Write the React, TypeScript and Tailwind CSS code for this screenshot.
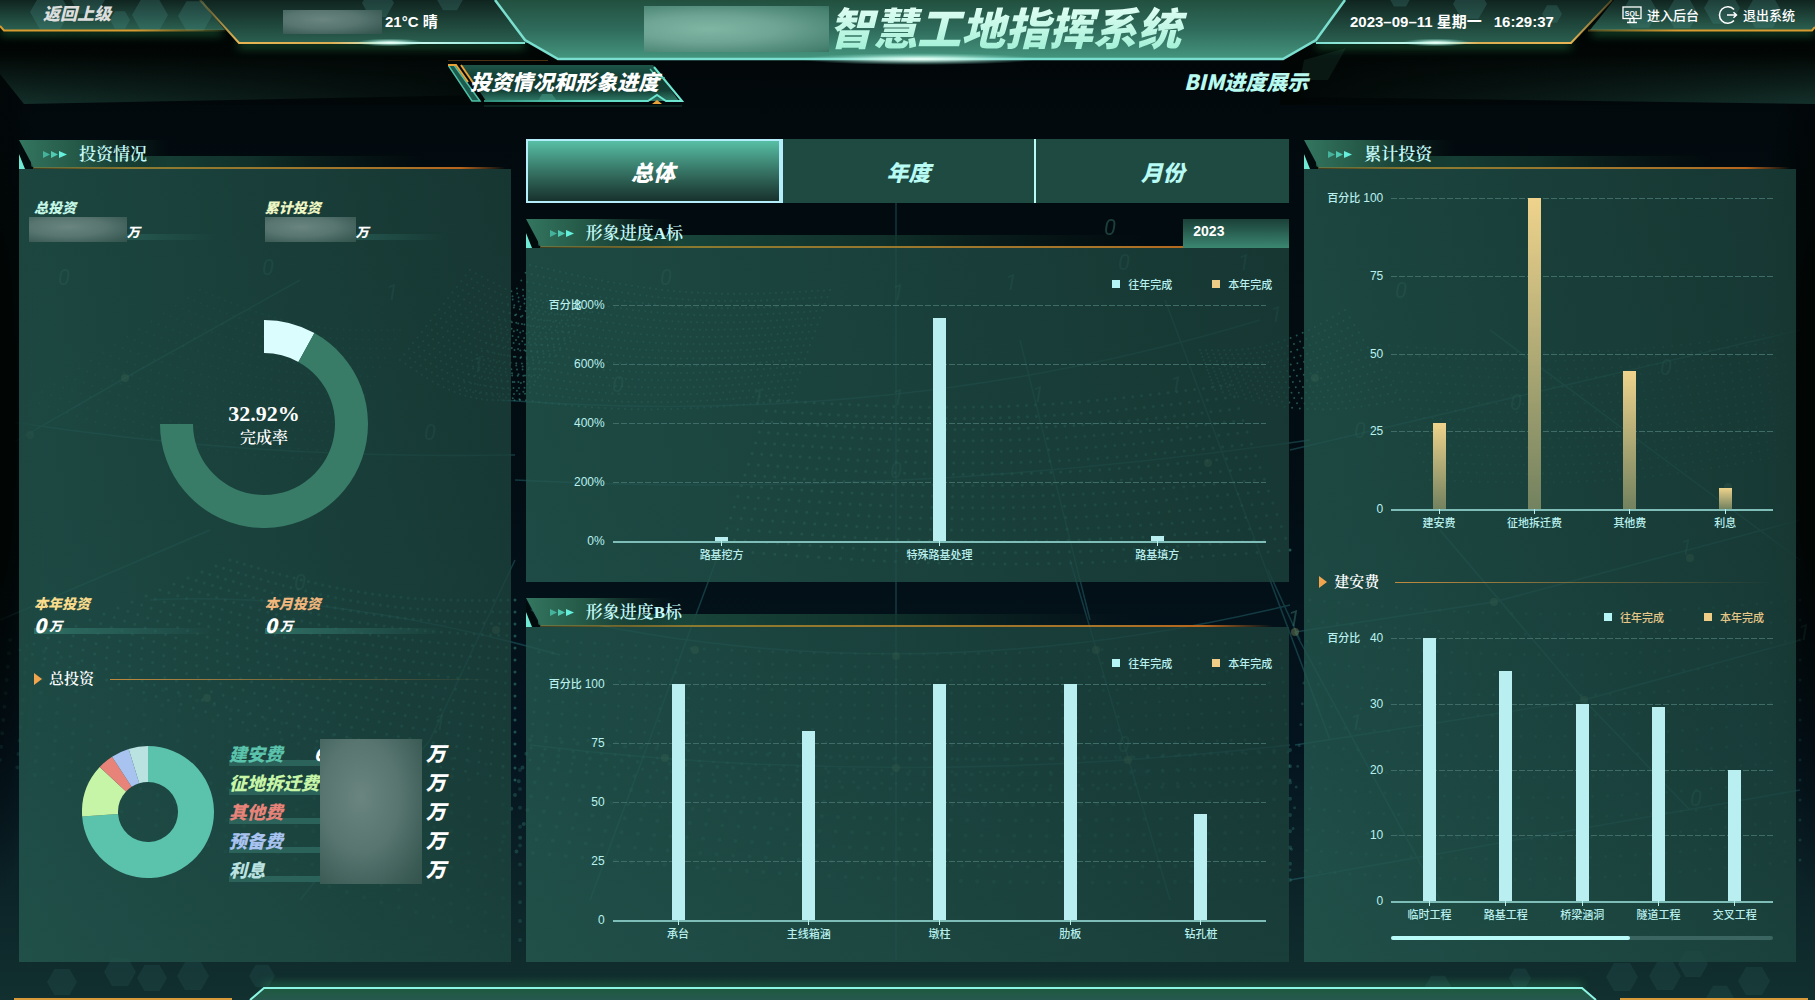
import type { ReactNode } from "react";

const display = "font-['Noto_Sans_CJK_SC',sans-serif] font-black italic";
const serif = "font-['Liberation_Serif','Noto_Serif_CJK_SC','Noto_Sans_CJK_SC',serif]";

/* ---------- backdrop ---------- */

type Pt = [number, number];

function dots([a, b, c, d]: [Pt, Pt, Pt, Pt], cols: number, rows: number) {
  let path = "";
  for (let j = 0; j <= rows; j++) {
    for (let i = 0; i <= cols; i++) {
      const u = i / cols;
      const v = j / rows;
      const x = (1 - v) * ((1 - u) * a[0] + u * b[0]) + v * ((1 - u) * d[0] + u * c[0]);
      const y =
        (1 - v) * ((1 - u) * a[1] + u * b[1]) + v * ((1 - u) * d[1] + u * c[1]) + 14 * Math.sin(u * Math.PI);
      path += `M${x.toFixed(1)} ${y.toFixed(1)}h0`;
    }
  }
  return path;
}

const patches: { d: string; w: number; o: number }[] = [
  { d: dots([[470, 270], [600, 300], [520, 400], [400, 360]], 22, 16), w: 2, o: 0.5 },
  { d: dots([[530, 265], [830, 290], [790, 400], [460, 390]], 50, 16), w: 2, o: 0.5 },
  { d: dots([[770, 400], [1230, 385], [1290, 550], [720, 550]], 52, 14), w: 3, o: 0.5 },
  { d: dots([[200, 290], [400, 330], [330, 460], [30, 400]], 32, 14), w: 2, o: 0.25 },
  { d: dots([[230, 560], [515, 600], [515, 780], [20, 650]], 40, 15), w: 3, o: 0.45 },
  { d: dots([[10, 640], [520, 770], [520, 940], [0, 760]], 30, 9), w: 4, o: 0.2 },
  { d: dots([[540, 640], [1280, 640], [1290, 780], [530, 760]], 54, 10), w: 3, o: 0.32 },
  { d: dots([[530, 740], [1290, 750], [1290, 880], [500, 850]], 48, 8), w: 4, o: 0.28 },
  { d: dots([[1200, 350], [1345, 310], [1400, 400], [1215, 390]], 24, 12), w: 2, o: 0.5 },
  { d: dots([[1380, 345], [1800, 330], [1810, 450], [1430, 480]], 46, 15), w: 2, o: 0.32 },
  { d: dots([[1310, 600], [1800, 600], [1800, 860], [1290, 870]], 34, 13), w: 3, o: 0.26 },
];

const digits: [string, number, number][] = [
  ["0", 58, 285], ["0", 262, 275], ["1", 386, 300], ["0", 424, 440], ["1", 472, 372], ["0", 294, 590],
  ["1", 434, 730], ["0", 660, 285], ["0", 612, 392], ["1", 752, 405], ["1", 892, 300], ["1", 892, 405],
  ["0", 890, 478], ["1", 1005, 290], ["0", 1104, 235], ["0", 1118, 270], ["1", 1238, 270], ["1", 1170, 392],
  ["1", 1032, 402], ["0", 1118, 752], ["1", 1270, 322], ["0", 1395, 298], ["0", 1660, 375], ["0", 1510, 410],
  ["0", 1354, 438], ["1", 1680, 555], ["1", 1350, 730], ["0", 1690, 806], ["1", 1288, 626], ["1", 1798, 640],
];

const nodes: Pt[] = [
  [125, 378], [30, 435], [207, 698], [496, 630], [695, 650], [896, 656], [1096, 650], [665, 758], [896, 768],
  [1128, 760], [1295, 632], [1494, 602], [1584, 700], [1690, 558], [1208, 463], [1315, 378], [1728, 487],
];

function hex(x: number, y: number, r: number) {
  const k = r * 0.87;
  return `M${x - r} ${y}L${x - r / 2} ${y - k}H${x + r / 2}L${x + r} ${y}L${x + r / 2} ${y + k}H${x - r / 2}Z`;
}

const topHexes = [
  hex(50, 12, 20), hex(88, -2, 18), hex(120, 20, 10), hex(150, 15, 18), hex(195, 16, 17), hex(378, 3, 16),
  hex(450, -2, 14), hex(1470, 4, 17), hex(1552, 14, 10), hex(1640, 12, 18), hex(1682, 14, 16), hex(1722, 8, 18),
  hex(1764, 12, 18), hex(1400, -4, 12),
].join("");

const bottomHexes = [
  hex(62, 982, 15), hex(120, 972, 16), hex(152, 978, 15), hex(193, 976, 16), hex(262, 976, 13), hex(1622, 977, 16),
  hex(1665, 976, 16), hex(1693, 964, 15), hex(1754, 981, 16), hex(1520, 978, 11), hex(1438, 988, 14),
  hex(1720, 998, 14),
].join("");

function Backdrop() {
  return (
    <svg
      aria-hidden="true"
      className="absolute inset-0 h-full w-full"
      viewBox="0 0 1815 1000"
      preserveAspectRatio="none"
    >
      <defs>
        <linearGradient id="sky" x2="0" y2="1">
          <stop offset="0" stopColor="#010403" />
          <stop offset="0.12" stopColor="#020a0e" />
          <stop offset="0.5" stopColor="#020e14" />
          <stop offset="0.75" stopColor="#04141f" />
          <stop offset="1" stopColor="#12302f" />
        </linearGradient>
        <radialGradient id="edge">
          <stop offset="0.3" stopColor="#010504" />
          <stop offset="1" stopColor="#010504" stopOpacity="0" />
        </radialGradient>
        <linearGradient id="core" x2="0" y2="1">
          <stop offset="0" stopColor="#22503f" />
          <stop offset="0.5" stopColor="#2f6b5b" />
          <stop offset="1" stopColor="#45967e" />
        </linearGradient>
        <linearGradient id="wing" x2="0" y2="1">
          <stop offset="0" stopColor="#10241f" />
          <stop offset="0.5" stopColor="#1d4238" />
          <stop offset="1" stopColor="#2b6050" />
        </linearGradient>
        <linearGradient id="under" x2="0" y2="1">
          <stop offset="0" stopColor="#000202" />
          <stop offset="0.35" stopColor="#020806" />
          <stop offset="1" stopColor="#14302a" />
        </linearGradient>
        <linearGradient id="shadeL">
          <stop offset="0" stopColor="#010605" stopOpacity="0" />
          <stop offset="1" stopColor="#010605" />
        </linearGradient>
        <linearGradient id="shadeR" x1="1" x2="0">
          <stop offset="0" stopColor="#010605" stopOpacity="0" />
          <stop offset="1" stopColor="#010605" />
        </linearGradient>
        <linearGradient id="trimL" gradientUnits="userSpaceOnUse" x1="200" x2="525">
          <stop offset="0" stopColor="#c99f45" stopOpacity="0.3" />
          <stop offset="0.12" stopColor="#e8b552" />
          <stop offset="0.4" stopColor="#dcae52" />
          <stop offset="0.6" stopColor="#d8fff4" />
          <stop offset="1" stopColor="#7adfd0" />
        </linearGradient>
        <linearGradient id="trimR" gradientUnits="userSpaceOnUse" x1="1612" x2="1316">
          <stop offset="0" stopColor="#c99f45" stopOpacity="0.3" />
          <stop offset="0.14" stopColor="#e8b552" />
          <stop offset="0.45" stopColor="#dcae52" />
          <stop offset="0.6" stopColor="#d8fff4" />
          <stop offset="1" stopColor="#7adfd0" />
        </linearGradient>
        <linearGradient id="orangeL" gradientUnits="userSpaceOnUse" x1="0" x2="225">
          <stop offset="0.6" stopColor="#d99a2e" />
          <stop offset="1" stopColor="#d99a2e" stopOpacity="0.1" />
        </linearGradient>
        <linearGradient id="orangeR" gradientUnits="userSpaceOnUse" x1="1815" x2="1585">
          <stop offset="0.6" stopColor="#d99a2e" />
          <stop offset="1" stopColor="#d99a2e" stopOpacity="0.3" />
        </linearGradient>
        <radialGradient id="flare">
          <stop offset="0" stopColor="#f0fffa" />
          <stop offset="0.4" stopColor="#c8f8ea" stopOpacity="0.7" />
          <stop offset="1" stopColor="#7adfd0" stopOpacity="0" />
        </radialGradient>
        <linearGradient id="foot" x2="0" y2="1">
          <stop offset="0" stopColor="#1e5a3e" />
          <stop offset="1" stopColor="#26584f" />
        </linearGradient>
        <filter id="glow" x="-5%" y="-80%" width="110%" height="300%">
          <feGaussianBlur stdDeviation="5" />
        </filter>
      </defs>

      <rect width="1815" height="1000" fill="url(#sky)" />

      <g fill="none" stroke="#3f9b90" strokeLinecap="round">
        {patches.map((p, i) => (
          <path key={i} d={p.d} strokeWidth={p.w} opacity={p.o} />
        ))}
      </g>
      <g fill="none" stroke="#2e8088" strokeWidth="1.5" opacity="0.38">
        <path d="M0 450L125 378L300 280M0 420Q250 460 515 455M0 620L210 530M150 600Q330 590 560 655M515 560L430 740L300 900" />
        <path d="M530 610Q896 700 1290 605M530 745Q896 790 1290 745M500 400Q896 430 1260 320M896 150V960M515 480Q896 500 1310 440" />
        <path d="M720 550L590 900M1070 560L1170 900M1020 340L1090 620M1165 300L1330 740M1268 570L1300 640" />
        <path d="M1290 450L1800 330M1295 632L1494 602L1800 520M1295 745L1584 700L1800 640M1440 530L1584 700L1690 810M1295 632L1440 900M1290 880L1800 790M1490 330L1800 560" />
      </g>
      <g fill="#7a8a5a" opacity="0.45">
        {nodes.map(([x, y]) => (
          <circle key={`${x}-${y}`} cx={x} cy={y} r="4" />
        ))}
      </g>
      <g fill="#4b9a88" opacity="0.36" fontSize="22" fontStyle="italic" fontFamily="Roboto, sans-serif">
        {digits.map(([t, x, y]) => (
          <text key={`${x}-${y}`} x={x} y={y}>
            {t}
          </text>
        ))}
      </g>

      <ellipse cx="0" cy="420" rx="45" ry="480" fill="url(#edge)" />
      <ellipse cx="1815" cy="420" rx="55" ry="480" fill="url(#edge)" />

      <path d="M0 30H540V94L24 104L0 74Z" fill="url(#under)" />
      <path d="M0 30H560V105H0Z" fill="url(#shadeL)" />
      <path d="M1815 30H1300V97L1815 104Z" fill="url(#under)" />
      <path d="M1280 30H1815V105H1280Z" fill="url(#shadeR)" />
      <path d="M1304 60L1346 48L1328 80H1300Z" fill="#0a1814" />

      <g stroke="#2f9a5c" strokeWidth="6" fill="none" filter="url(#glow)" opacity="0.55">
        <path d="M0 32H222M238 45H525M1316 45H1571M1592 32H1815M264 987H1582" />
      </g>

      <path d="M0 0H200L225 30H4L0 26Z" fill="url(#wing)" />
      <path d="M1815 0H1614L1590 30H1813L1815 26Z" fill="url(#wing)" />
      <path d="M200 0L238 43H530L495 0Z" fill="url(#wing)" />
      <path d="M1612 0L1571 43H1312L1345 0Z" fill="url(#wing)" />
      <path d="M495 0L525 40L558 59H1283L1316 40L1345 0Z" fill="url(#core)" />

      <path d={topHexes} fill="#4a8f8a" opacity="0.26" />
      <path d={bottomHexes} fill="#3f8580" opacity="0.14" />

      <path d="M0 26L4 30.500H225" fill="none" stroke="url(#orangeL)" strokeWidth="2" />
      <path d="M1815 27L1812 30.500H1588" fill="none" stroke="url(#orangeR)" strokeWidth="2" />
      <path d="M200 0L239 43H525" fill="none" stroke="url(#trimL)" strokeWidth="2" />
      <path d="M1612 0L1571 43H1316" fill="none" stroke="url(#trimR)" strokeWidth="2" />
      <path d="M495 0L525 40L558 59H1283L1316 40L1345 0" fill="none" stroke="#7adfcf" strokeWidth="2.500" />
      <ellipse cx="390" cy="42.500" rx="34" ry="4" fill="url(#flare)" />
      <ellipse cx="1436" cy="42.500" rx="34" ry="4" fill="url(#flare)" />
      <ellipse cx="919" cy="59" rx="120" ry="6" fill="url(#flare)" />

      <path d="M250 1000L264 988H1582L1596 1000Z" fill="url(#foot)" />
      <path d="M250 1000L264 988H1582L1596 1000" fill="none" stroke="#8df5e4" strokeWidth="2" />
      <path d="M14 999H232M1620 999H1808" stroke="#d99a3a" strokeWidth="2" />
    </svg>
  );
}

/* ---------- shared pieces ---------- */

function Redacted({ className }: { className: string }) {
  return (
    <div
      className={`${className} bg-[radial-gradient(ellipse_at_40%_40%,#6a857f_0%,#587570_45%,#3a5a54_85%,#34534d_100%)]`}
    />
  );
}

function PanelTitle({ children, aside }: { children: string; aside?: ReactNode }) {
  return (
    <header className="relative flex h-[29px] items-center justify-between">
      <svg aria-hidden="true" className="absolute inset-0 h-full w-full">
        <defs>
          <linearGradient id="pt-wedge">
            <stop offset="0" stopColor="#33765f" />
            <stop offset="0.45" stopColor="#225343" />
            <stop offset="1" stopColor="#0c211c" stopOpacity="0" />
          </linearGradient>
          <linearGradient id="pt-band">
            <stop offset="0" stopColor="#1f5546" />
            <stop offset="0.45" stopColor="#143a30" stopOpacity="0.8" />
            <stop offset="0.8" stopColor="#0c211c" stopOpacity="0" />
          </linearGradient>
          <linearGradient id="pt-line">
            <stop offset="0" stopColor="#a5852f" stopOpacity="0.4" />
            <stop offset="0.2" stopColor="#8a7a30" />
            <stop offset="0.75" stopColor="#a8742a" />
            <stop offset="0.87" stopColor="#b8651c" />
            <stop offset="0.96" stopColor="#b8651c" stopOpacity="0" />
          </linearGradient>
        </defs>
        <rect x="12" y="16" width="100%" height="11" fill="url(#pt-band)" />
        <polygon points="0,0 150,0 150,28 15,28" fill="url(#pt-wedge)" />
        <polygon points="0,3 14,29 7,29 0,14" fill="#020b0b" />
        <polygon points="0,14 6,29 0,29" fill="#6fe8d4" />
        <rect x="14" y="27" width="100%" height="2" fill="url(#pt-line)" />
        <path d="M24 11L31 14.500L24 18Z" fill="#45b39c" />
        <path d="M32 11L39 14.500L32 18Z" fill="#50cab2" />
        <path d="M40 11L48 14.500L40 18Z" fill="#66f0dc" />
      </svg>
      <h2 className={`${serif} relative pl-[60px] text-[17px] leading-[31px] font-semibold text-[#c4fbfa]`}>
        {children}
      </h2>
      {aside}
    </header>
  );
}

function SubTitle({ children }: { children: string }) {
  return (
    <div className="flex items-center">
      <svg aria-hidden="true" className="h-[12px] w-[8px]" viewBox="0 0 8 12">
        <path d="M0 0L8 6L0 12Z" fill="#f2a54c" />
      </svg>
      <h3 className={`${serif} ml-[7px] text-[15px] leading-[20px] font-semibold text-white`}>{children}</h3>
      <div className="ml-4 h-px flex-1 bg-linear-to-r from-[#c08a3e] to-transparent" />
    </div>
  );
}

interface ChartProps {
  ticks: string[];
  data: { label: string; value: number }[];
  max: number;
  plot: string;
  bar: string;
}

function BarChart({ ticks, data, max, plot, bar }: ChartProps) {
  return (
    <div className="grid grid-cols-[56px_1fr] gap-x-[8px] font-['Liberation_Sans','Noto_Sans_CJK_SC',sans-serif] text-[#b9f0ee]">
      <div className={`${plot} flex flex-col justify-between text-right text-[12px]`}>
        {ticks.map((t, i) => (
          <div key={t} className="flex h-0 items-center justify-end">
            {i === 0 && <span className="mr-auto w-0 text-[11px] font-medium whitespace-nowrap">百分比</span>}
            <span>{t}</span>
          </div>
        ))}
      </div>
      <div className={`${plot} grid`}>
        <div className="col-start-1 row-start-1 flex flex-col justify-between">
          {ticks.map((t, i) => (
            <div key={t} className="h-0">
              <div
                className={
                  i === ticks.length - 1
                    ? "h-[2px] bg-[#7fbdb8]"
                    : "h-px bg-[repeating-linear-gradient(90deg,#3f6c66_0px,#3f6c66_6px,transparent_6px,transparent_8px)]"
                }
              />
            </div>
          ))}
        </div>
        <div className="col-start-1 row-start-1 flex min-h-0 items-end">
          {data.map((d) => (
            <div key={d.label} className="flex h-full flex-1 items-end justify-center">
              <div className={`${bar} w-[13px]`} style={{ height: `${(d.value / max) * 100}%` }} />
            </div>
          ))}
        </div>
      </div>
      <div className="col-start-2 flex">
        {data.map((d) => (
          <div key={d.label} className="flex flex-1 flex-col items-center">
            <div className="h-[5px] w-px bg-[#b9f0ee]" />
            <span className="text-[11px] leading-[19px] font-medium whitespace-nowrap">{d.label}</span>
          </div>
        ))}
      </div>
    </div>
  );
}

function Legend({ tone }: { tone: string }) {
  return (
    <ul
      className={`${tone} flex justify-end gap-[40px] font-['Noto_Sans_CJK_SC',sans-serif] text-[11px] leading-[16px] font-medium`}
    >
      <li className="flex items-center gap-[8px]">
        <span className="size-[8px] bg-[#b5f5f5]" />
        往年完成
      </li>
      <li className="flex items-center gap-[8px]">
        <span className="size-[8px] bg-[#f0cd86]" />
        本年完成
      </li>
    </ul>
  );
}

const cyanBar = "bg-[#b9eff1]";
const goldBar = "bg-linear-to-b from-[#efd38c] to-[#73825f]";
const panelBody = "bg-[linear-gradient(80deg,rgba(36,88,79,0.82),rgba(27,64,58,0.82))]";

/* ---------- left column ---------- */

function Stat({ label, tone, children }: { label: string; tone: string; children: ReactNode }) {
  return (
    <div>
      <p className={`${display} ${tone} text-[14px] leading-[20px]`}>{label}</p>
      <div className="grid">
        <div className="col-start-1 row-start-1 mb-[2px] h-[6px] w-[180px] self-end bg-linear-to-r from-[#2f6f64] to-transparent" />
        <div className="col-start-1 row-start-1 flex items-end">{children}</div>
      </div>
    </div>
  );
}

function ring(cx: number, cy: number, r: number, q: number, from: number, to: number) {
  const p = (rad: number, deg: number) => {
    const t = (deg * Math.PI) / 180;
    return `${(cx + rad * Math.sin(t)).toFixed(2)} ${(cy - rad * Math.cos(t)).toFixed(2)}`;
  };
  const big = to - from > 180 ? 1 : 0;
  return `M${p(r, from)}A${r} ${r} 0 ${big} 1 ${p(r, to)}L${p(q, to)}A${q} ${q} 0 ${big} 0 ${p(q, from)}Z`;
}

const shares = [
  { from: 0, to: 266, fill: "#5bc2ab" },
  { from: 266, to: 313, fill: "#c6f5a8" },
  { from: 313, to: 327, fill: "#e8837a" },
  { from: 327, to: 343, fill: "#a9c3f0" },
  { from: 343, to: 360, fill: "#b9e2e0" },
];

const costs = [
  { label: "建安费", tone: "text-[#5bc2ab]", digit: "6" },
  { label: "征地拆迁费", tone: "text-[#c6f5a8]", digit: "" },
  { label: "其他费", tone: "text-[#e8837a]", digit: "" },
  { label: "预备费", tone: "text-[#a9c3f0]", digit: "" },
  { label: "利息", tone: "text-[#b9e2e0]", digit: "" },
];

function InvestmentPanel() {
  return (
    <section className="mt-px flex flex-col">
      <PanelTitle>投资情况</PanelTitle>
      <div className={`${panelBody} flex-1 pl-[15px]`}>
        <div className="grid grid-cols-[231fr_246fr] pt-[28px]">
          <Stat label="总投资" tone="text-[#c5f8e6]">
            <Redacted className="-ml-[5px] h-[25px] w-[98px]" />
            <span className={`${display} text-[13px] leading-[20px] text-white`}>万</span>
          </Stat>
          <Stat label="累计投资" tone="text-[#eff7c4]">
            <Redacted className="h-[25px] w-[91px]" />
            <span className={`${display} text-[13px] leading-[20px] text-white`}>万</span>
          </Stat>
        </div>
        <div className="mt-[78px] flex pl-[126px]">
          <div className="grid place-items-center">
            <svg aria-hidden="true" className="col-start-1 row-start-1 size-[208px]" viewBox="0 0 208 208">
              <path d={ring(104, 104, 104, 71, 0, 29)} fill="#dcfdfd" />
              <path d={ring(104, 104, 104, 71, 29, 270)} fill="#387c68" />
            </svg>
            <div className={`${serif} col-start-1 row-start-1 pt-1 text-center text-white`}>
              <p className="text-[22px] leading-[24px] font-bold">32.92%</p>
              <p className="text-[16px] leading-[24px] font-semibold">完成率</p>
            </div>
          </div>
        </div>
        <div className="mt-[65px] grid grid-cols-[231fr_246fr]">
          <Stat label="本年投资" tone="text-[#f8dc8c]">
            <span className={`${display} text-[20px] leading-[23px] text-white`}>0</span>
            <span className={`${display} pl-[3px] text-[13px] leading-[20px] text-white`}>万</span>
          </Stat>
          <Stat label="本月投资" tone="text-[#f0b67c]">
            <span className={`${display} text-[20px] leading-[23px] text-white`}>0</span>
            <span className={`${display} pl-[3px] text-[13px] leading-[20px] text-white`}>万</span>
          </Stat>
        </div>
        <div className="mt-[33px] pr-4">
          <SubTitle>总投资</SubTitle>
        </div>
        <div className="mt-[50px] flex items-center pl-[48px]">
          <svg aria-hidden="true" className="size-[132px]" viewBox="0 0 132 132">
            {shares.map((s) => (
              <path key={s.fill} d={ring(66, 66, 66, 30, s.from, s.to)} fill={s.fill} />
            ))}
          </svg>
          <ul className="ml-[15px] w-[91px]">
            {costs.map((c) => (
              <li
                key={c.label}
                className={`${display} ${c.tone} flex h-[29px] justify-between bg-[linear-gradient(#2b6259,#2b6259)] bg-size-[100%_6px] bg-position-[0_21px] bg-no-repeat text-[18px] leading-[28px] whitespace-nowrap`}
              >
                {c.label}
                {c.digit && <span className="w-[6px] overflow-hidden text-white">{c.digit}</span>}
              </li>
            ))}
          </ul>
          <Redacted className="h-[145px] w-[102px]" />
          <ul className="ml-[4px]">
            {costs.map((c) => (
              <li key={c.label} className={`${display} h-[29px] text-[20px] leading-[28px] text-white`}>
                万
              </li>
            ))}
          </ul>
        </div>
      </div>
    </section>
  );
}

/* ---------- middle column ---------- */

const percentTicks = ["100", "75", "50", "25", "0"];

function ProgressSection() {
  return (
    <section className="flex flex-col">
      <div
        role="tablist"
        className={`${display} grid h-[64px] grid-cols-[257fr_254fr_253fr] bg-[#1f4a41] text-[22px] text-[#b8faf4]`}
      >
        <button
          role="tab"
          aria-selected="true"
          className="border-2 border-r-4 border-[#b4eefa] bg-linear-to-b from-[#57bfa5] to-[#18322c] text-white"
        >
          总体
        </button>
        <button role="tab" aria-selected="false" className="border-r-2 border-[#b8faf4]">
          年度
        </button>
        <button role="tab" aria-selected="false">
          月份
        </button>
      </div>

      <div className="mt-4">
        <PanelTitle
          aside={
            <select
              aria-label="年份"
              defaultValue="2023"
              className="relative h-[29px] w-[106px] appearance-none bg-linear-to-b from-[#1b4038] to-[#3b8871] pr-2 pb-1 pl-[10px] font-['Liberation_Sans',sans-serif] text-[14px] font-bold text-white"
            >
              <option>2023</option>
            </select>
          }
        >
          形象进度A标
        </PanelTitle>
        <div className={`${panelBody} h-[334px] pt-[28px] pr-[23px] pl-[23px]`}>
          <div className="-mr-[6px]">
            <Legend tone="text-[#b9f0ee]" />
          </div>
          <div className="mt-[13px]">
            <BarChart
              ticks={["800%", "600%", "400%", "200%", "0%"]}
              max={800}
              plot="h-[236px]"
              bar={cyanBar}
              data={[
                { label: "路基挖方", value: 15 },
                { label: "特殊路基处理", value: 756 },
                { label: "路基填方", value: 18 },
              ]}
            />
          </div>
        </div>
      </div>

      <div className="mt-4 flex flex-1 flex-col">
        <PanelTitle>形象进度B标</PanelTitle>
        <div className={`${panelBody} flex-1 pt-[28px] pr-[23px] pl-[23px]`}>
          <div className="-mr-[6px]">
            <Legend tone="text-[#b9f0ee]" />
          </div>
          <div className="mt-[13px]">
            <BarChart
              ticks={percentTicks}
              max={100}
              plot="h-[236px]"
              bar={cyanBar}
              data={[
                { label: "承台", value: 100 },
                { label: "主线箱涵", value: 80.3 },
                { label: "墩柱", value: 100 },
                { label: "肋板", value: 100 },
                { label: "钻孔桩", value: 45 },
              ]}
            />
          </div>
        </div>
      </div>
    </section>
  );
}

/* ---------- right column ---------- */

function CumulativePanel() {
  return (
    <section className="mt-px flex flex-col">
      <PanelTitle>累计投资</PanelTitle>
      <div className={`${panelBody} flex-1 px-[23px] pt-[29px]`}>
        <BarChart
          ticks={percentTicks}
          max={100}
          plot="h-[311px]"
          bar={goldBar}
          data={[
            { label: "建安费", value: 27.6 },
            { label: "征地拆迁费", value: 100 },
            { label: "其他费", value: 44.4 },
            { label: "利息", value: 6.8 },
          ]}
        />
        <div className="mt-[39px] -ml-[8px]">
          <SubTitle>建安费</SubTitle>
        </div>
        <div className="mt-[17px] pr-[9px]">
          <Legend tone="text-[#e6c788]" />
        </div>
        <div className="mt-[13px]">
          <BarChart
            ticks={["40", "30", "20", "10", "0"]}
            max={40}
            plot="h-[263px]"
            bar={cyanBar}
            data={[
              { label: "临时工程", value: 40 },
              { label: "路基工程", value: 35 },
              { label: "桥梁涵洞", value: 30 },
              { label: "隧道工程", value: 29.5 },
              { label: "交叉工程", value: 20 },
            ]}
          />
        </div>
        <div className="mt-[11px] ml-[64px] h-[4px] rounded-full bg-[#3a6560]">
          <div className="h-full w-5/8 rounded-full bg-[#b8fbf8]" />
        </div>
      </div>
    </section>
  );
}

/* ---------- header ---------- */

function TopBar() {
  return (
    <header className="relative grid h-[60px] grid-cols-[525fr_791fr_499fr] items-start whitespace-nowrap">
      <div className="grid grid-cols-[283fr_242fr] items-start">
        <div className="pl-[43px]">
          <button className={`${display} text-[17px] leading-[26px] text-[#dcdedd]`}>返回上级</button>
        </div>
        <div className="mt-2 flex items-center">
          <Redacted className="h-[24px] w-[99px]" />
          <span className="ml-[3px] font-['Liberation_Sans','Noto_Sans_CJK_SC',sans-serif] text-[15px] leading-[28px] font-bold text-white">
            21°C 晴
          </span>
        </div>
      </div>
      <div className="flex items-start pl-[119px]">
        <div className="mt-[6px] h-[46px] w-[185px] bg-[radial-gradient(ellipse_at_35%_50%,#7fb5a3_0%,#6fa594_40%,#46806f_90%,#3c7464_100%)]" />
        <h1
          className={`${display} bg-linear-to-b from-[#e8fff8] to-[#9ff0d6] bg-clip-text pr-2 text-[44px] leading-[52px] text-transparent`}
        >
          智慧工地指挥系统
        </h1>
      </div>
      <div className="flex items-start justify-between pr-[20px] pl-[34px]">
        <p className="mt-2 font-['Liberation_Sans','Noto_Sans_CJK_SC',sans-serif] text-[15px] leading-[28px] font-bold text-white">
          <span>2023–09–11 星期一</span>
          <span className="ml-3">16:29:37</span>
        </p>
        <div className="mt-[3px] flex gap-[19px] font-['Noto_Sans_CJK_SC',sans-serif] text-[13px] leading-[24px] font-medium text-white">
          <button className="flex items-center gap-[5px]">
            <svg aria-hidden="true" className="h-[18px] w-[20px]" viewBox="0 0 20 18" fill="none" stroke="#fff">
              <rect x="1" y="1" width="18" height="11.500" strokeWidth="1.300" />
              <path d="M8 12.500V16M12 12.500V16M5 16.500H15" strokeWidth="1.300" />
              <text
                x="10"
                y="9.500"
                fontSize="7"
                fontWeight="700"
                textAnchor="middle"
                fill="#fff"
                stroke="none"
                fontFamily="Liberation Sans, sans-serif"
              >
                SQL
              </text>
            </svg>
            进入后台
          </button>
          <button className="flex items-center gap-[5px]">
            <svg aria-hidden="true" className="size-[20px]" viewBox="0 0 20 20" fill="none" stroke="#fff">
              <path d="M16 4.500A8.300 8.300 0 1 0 16 15.500" strokeWidth="1.600" />
              <path d="M9 10H18M15.500 7.200L18.500 10L15.500 12.800" strokeWidth="1.500" />
            </svg>
            退出系统
          </button>
        </div>
      </div>
    </header>
  );
}

function Nav() {
  return (
    <nav className="relative grid h-[47px] grid-cols-[448fr_236fr_500fr_631fr] text-[21px] whitespace-nowrap">
      <button aria-current="page" className={`${display} col-start-2 grid h-[47px] text-white`}>
        <svg
          aria-hidden="true"
          className="col-start-1 row-start-1 h-full w-full"
          viewBox="0 0 236 47"
          preserveAspectRatio="none"
          fill="none"
        >
          <defs>
            <linearGradient id="nv-fill" x2="0" y2="1">
              <stop offset="0" stopColor="#1d5548" />
              <stop offset="0.4" stopColor="#123a31" />
              <stop offset="0.7" stopColor="#143f35" />
              <stop offset="1" stopColor="#2f7a68" />
            </linearGradient>
            <linearGradient id="nv-top">
              <stop offset="0" stopColor="#f0a93a" />
              <stop offset="0.35" stopColor="#e09a2f" />
              <stop offset="0.5" stopColor="#2f8a76" />
              <stop offset="1" stopColor="#2f8a76" />
            </linearGradient>
            <linearGradient id="nv-bottom">
              <stop offset="0" stopColor="#2f8a76" />
              <stop offset="0.5" stopColor="#5cd8c0" />
              <stop offset="1" stopColor="#6fe8d2" />
            </linearGradient>
          </defs>
          <path d="M14 5H205L231 41H38Z" fill="url(#nv-fill)" />
          <path d="M90 41L94 34H104L109 41Z" fill="#4aa08c" opacity="0.5" />
          <path d="M0 0H100" stroke="#9a5c1e" strokeWidth="1" />
          <path d="M0 5H6L32 41H24L0 5" fill="#1d5a4d" stroke="#4cc0a6" strokeWidth="1.500" />
          <path d="M0 5H8L20 22" stroke="#e8a23a" strokeWidth="2" />
          <path d="M13 5H205" stroke="url(#nv-top)" strokeWidth="2" />
          <path d="M13 5L26 24" stroke="#e8a23a" strokeWidth="2" />
          <path d="M206 7L234 41H218L209 35L200 41H36" stroke="url(#nv-bottom)" strokeWidth="2" />
          <path d="M202 9L210 18H217" stroke="#4cc0a6" strokeWidth="1.500" />
          <path d="M204 44L209 40L214 44Z" fill="#e8a23a" />
          <path d="M36 46H234" stroke="#123a30" strokeWidth="1" />
        </svg>
        <span className="col-start-1 row-start-1 pl-[22px] text-left leading-[43px]">投资情况和形象进度</span>
      </button>
      <button className={`${display} col-start-4 h-[47px] justify-self-start pb-1 text-[#b8faf0]`}>
        BIM进度展示
      </button>
    </nav>
  );
}

export default function App() {
  return (
    <div className="relative flex min-h-screen flex-col overflow-hidden bg-[#020a0e]">
      <Backdrop />
      <TopBar />
      <Nav />
      <main className="relative mt-8 mb-[38px] grid flex-1 grid-cols-[492fr_764fr_492fr] gap-[15px] px-[19px]">
        <InvestmentPanel />
        <ProgressSection />
        <CumulativePanel />
      </main>
    </div>
  );
}
